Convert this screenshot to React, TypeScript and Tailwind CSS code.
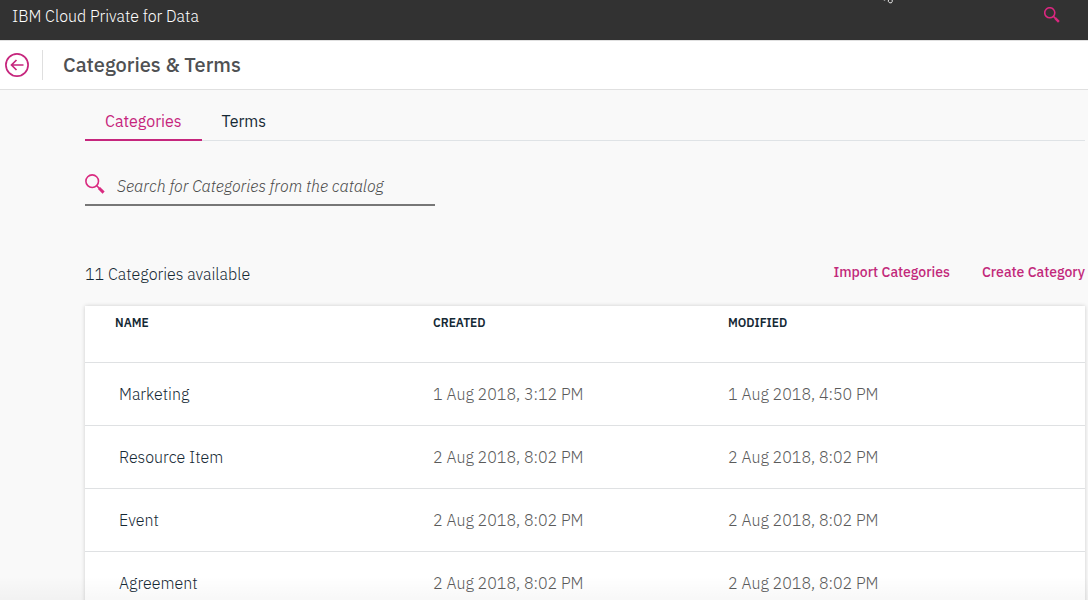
import { useState } from "react";

const tabs = ["Categories", "Terms"];

const rows = [
  { name: "Marketing", created: "1 Aug 2018, 3:12 PM", modified: "1 Aug 2018, 4:50 PM" },
  { name: "Resource Item", created: "2 Aug 2018, 8:02 PM", modified: "2 Aug 2018, 8:02 PM" },
  { name: "Event", created: "2 Aug 2018, 8:02 PM", modified: "2 Aug 2018, 8:02 PM" },
  { name: "Agreement", created: "2 Aug 2018, 8:02 PM", modified: "2 Aug 2018, 8:02 PM" },
];

function SearchIcon({ className, ring }: { className: string; ring: number }) {
  return (
    <svg viewBox="0 0 20 20" className={className} fill="none" stroke="currentColor" aria-hidden="true">
      <circle cx="7.2" cy="7.2" r="6.3" strokeWidth={ring} />
      <path d="M11.8 11.8l2.6 2.6" strokeWidth={ring} />
      <path d="M14 14l4.6 4.6" strokeWidth="3" />
    </svg>
  );
}

function BackIcon() {
  return (
    <svg viewBox="0 0 24 24" className="size-6" fill="none" stroke="currentColor" strokeWidth="1.7" aria-hidden="true">
      <circle cx="12" cy="12" r="11.1" />
      <path d="M18.5 12H7M11.5 7L6.5 12l5 5" />
    </svg>
  );
}

export default function App() {
  const [active, setActive] = useState("Categories");

  return (
    <div className="relative flex h-screen flex-col overflow-hidden bg-[#f9f9f9] font-['IBM_Plex_Sans',Roboto,sans-serif] text-base text-[#152935]">
      <header className="flex h-10 shrink-0 items-start justify-between bg-[#323232] pt-1 pr-7 pl-3">
        <span className="leading-6 font-light text-white">IBM Cloud Private for Data</span>
        <button type="button" aria-label="Search" className="mt-[3px] text-[#db2780]">
          <SearchIcon className="size-4" ring={2} />
        </button>
      </header>

      <div className="flex h-[50px] shrink-0 items-center border-y border-[#e0e0e0] bg-white pl-[5px]">
        <button type="button" aria-label="Back" className="text-[#c6267d]">
          <BackIcon />
        </button>
        <div className="ml-[13px] h-[30px] border-l border-[#dfdfdf]" />
        <h1 className="ml-5 text-xl font-medium text-[#4f5153]">Categories &amp; Terms</h1>
      </div>

      <main className="pr-[3px] pl-[85px]">
        <div role="tablist" className="mt-3 flex border-b border-[#dfe3e6]">
          {tabs.map((tab) => (
            <button
              key={tab}
              type="button"
              role="tab"
              aria-selected={active === tab}
              onClick={() => setActive(tab)}
              className={
                active === tab
                  ? "-mb-px h-[39px] border-b-2 border-[#c6267d] px-5 text-[#c6267d]"
                  : "-mb-px h-[39px] border-b-2 border-transparent px-5"
              }
            >
              {tab}
            </button>
          ))}
        </div>

        <div className="mt-7 flex h-[37px] w-[350px] items-start border-b-2 border-[#777777]">
          <label htmlFor="category-search" className="mt-[5px] text-[#d92b80]">
            <SearchIcon className="size-5" ring={1.6} />
          </label>
          <input
            id="category-search"
            type="text"
            aria-label="Search categories"
            placeholder="Search for Categories from the catalog"
            className="ml-3 h-[34px] min-w-0 flex-1 bg-transparent font-light italic outline-none placeholder:text-[#4a4a4a]"
          />
        </div>

        <div className="mt-14 flex items-start justify-between">
          <p className="leading-6 font-light">11 Categories available</p>
          <div className="flex gap-8 text-sm leading-5 font-medium text-[#c2297b]">
            <button type="button">Import Categories</button>
            <button type="button">Create Category</button>
          </div>
        </div>

        <table className="mt-5 w-full table-fixed bg-white text-left shadow-[0_0_4px_rgba(0,0,0,0.18)]">
          <thead>
            <tr className="h-14 align-top text-xs leading-4">
              <th className="w-[348px] pt-[9px] pl-[30px] font-semibold">NAME</th>
              <th className="w-[295px] pt-[9px] font-semibold">CREATED</th>
              <th className="pt-[9px] font-semibold">MODIFIED</th>
            </tr>
          </thead>
          <tbody className="font-light">
            {rows.map((row) => (
              <tr key={row.name} className="h-[63px] border-t border-[#dfe1e3]">
                <td className="pl-[34px]">{row.name}</td>
                <td className="text-[#5a5a5a]">{row.created}</td>
                <td className="text-[#5a5a5a]">{row.modified}</td>
              </tr>
            ))}
          </tbody>
        </table>
      </main>

      <div className="pointer-events-none absolute inset-x-0 bottom-0 h-6 bg-linear-to-b from-transparent to-black/3" />

      <svg viewBox="0 0 10 4" className="pointer-events-none absolute top-0 left-[883px] h-1 w-[10px]" aria-hidden="true">
        <path d="M0.8 0h1.4M5.4 0v1.6l1.2 1.2h1.8l0.8-1.2v-1.6" fill="none" stroke="#ffffff" strokeWidth="0.9" />
      </svg>
    </div>
  );
}
